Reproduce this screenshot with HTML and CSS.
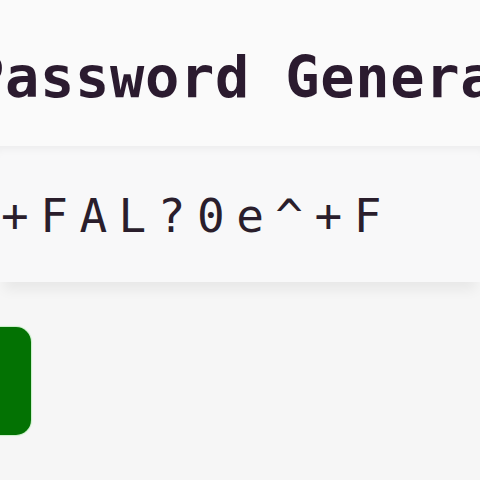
FILE: index.html
```html
<!DOCTYPE html>
<html>
<head>
<meta charset="utf-8">
<link rel="stylesheet" href="styles.css">
</head>
<body>
<div class="page">
  <header class="header">
    <h1 class="title">Password Generator</h1>
  </header>
  <div class="output">
    <span class="password">+FAL?0e^+F</span>
  </div>
  <div class="actions">
    <button class="btn" type="button"></button>
  </div>
</div>
</body>
</html>
```
FILE: styles.css
```css
html, body {
  margin: 0;
  padding: 0;
  background: #f6f6f6;
  overflow: hidden;
}
.page {
  width: 480px;
  height: 480px;
  overflow: hidden;
  display: flex;
  flex-direction: column;
}
.header {
  height: 146px;
  background: #fafafa;
  display: flex;
  align-items: center;
  flex-shrink: 0;
}
.title {
  margin: 0 0 0 -30px;
  font-family: "DejaVu Sans Mono", monospace;
  font-weight: bold;
  font-size: 57px;
  letter-spacing: 0.7px;
  color: #2b1b2f;
  white-space: nowrap;
  line-height: 1;
  padding-top: 8px;
}
.output {
  height: 136px;
  background: #f8f8f9;
  box-shadow: inset 0 9px 8px -6px rgba(0,0,0,0.05), 0 12px 12px -4px rgba(0,0,0,0.06);
  display: flex;
  align-items: center;
  flex-shrink: 0;
  position: relative;
}
.password {
  font-family: "DejaVu Sans Mono", monospace;
  font-size: 46px;
  letter-spacing: 11.5px;
  color: #2a1e2c;
  white-space: nowrap;
  line-height: 1;
  margin-left: 1px;
  padding-top: 4px;
}
.actions {
  padding-top: 45px;
  display: flex;
}
.btn {
  width: 60px;
  height: 108px;
  margin-left: -29px;
  background: #037203;
  border: none;
  border-radius: 15px;
  box-shadow: 0 0 1px 1px #c8efc8;
}
```
